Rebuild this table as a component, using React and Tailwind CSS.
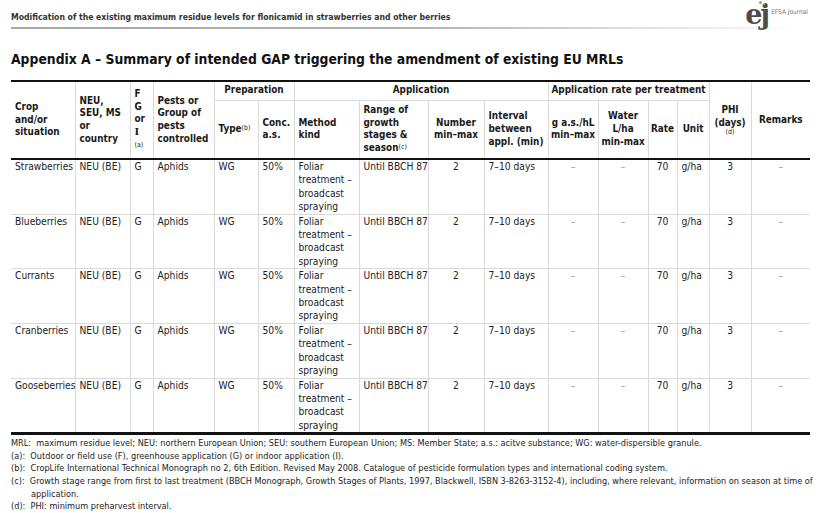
import React from "react";

const widths = [64, 55, 23, 61, 44, 36, 65, 69, 56, 64, 50, 50, 29, 32, 42, 59];

const crops = ["Strawberries", "Blueberries", "Currants", "Cranberries", "Gooseberries"];

const body = "font-['DejaVu_Sans_Condensed','DejaVu_Sans',sans-serif]";
const bold = "font-['DejaVu_Sans_Condensed','DejaVu_Sans',sans-serif] font-bold";

function Sup({ children }) {
  return <span className="text-[7px] font-normal align-[2px] leading-none">{children}</span>;
}

function Logo() {
  return (
    <div className="flex items-end gap-[3px] pr-[12px]">
      <div className="relative">
        <span className="absolute left-[14px] -top-[2px] flex gap-[1px]">
          <span className="w-[3px] h-[3px] rounded-full bg-[#9a9a9a]" />
          <span className="w-[2px] h-[2px] rounded-full bg-[#b5b5b5] mt-[2px]" />
        </span>
        <span className="block font-['DejaVu_Serif',serif] font-bold text-[27px] leading-[24px] text-[#4d4d4d] tracking-[-2px]">
          ej
        </span>
      </div>
      <span className="font-['DejaVu_Sans_Condensed','DejaVu_Sans',sans-serif] text-[6.5px] text-[#777] mb-[9px]">
        EFSA Journal
      </span>
    </div>
  );
}

export default function App() {
  const cellL = "border-l border-[#dadada]";
  const top = "border-t-2 border-t-[#111]";
  const bot = "border-b-2 border-b-[#111]";
  return (
    <div className={`w-[820px] h-[513px] bg-white text-[#222] overflow-hidden ${body}`}>
      {/* running header */}
      <div className="flex items-end justify-between pl-[11px] pt-[3px]">
        <div className="text-[8.6px] font-bold text-[#333] pb-[3px]">
          Modification of the existing maximum residue levels for flonicamid in strawberries and other berries
        </div>
        <Logo />
      </div>
      <div className="ml-[11px] w-[790px] h-[2px] bg-gradient-to-r from-[#a8a8a8] via-[#b0b0b0] to-transparent" />

      <h1 className={`${bold} text-[13.8px] leading-[18px] text-[#111] ml-[11px] mt-[21px]`}>
        Appendix A – Summary of intended GAP triggering the amendment of existing EU MRLs
      </h1>

      <table className="ml-[11px] mt-[12px] w-[799px] table-fixed border-collapse">
        <colgroup>
          {widths.map((w, i) => (
            <col key={i} style={{ width: w }} />
          ))}
        </colgroup>
        <thead className={`${bold} text-[9.9px] leading-[12.6px] text-[#1a1a1a]`}>
          <tr className="h-[19px]">
            <th rowSpan={2} className={`${top} ${bot} text-left align-middle px-[4px]`}>
              Crop and/or situation
            </th>
            <th rowSpan={2} className={`${cellL} ${top} ${bot} text-left align-middle px-[4px]`}>
              NEU, SEU, MS or country
            </th>
            <th rowSpan={2} className={`${cellL} ${top} ${bot} text-left align-middle px-[4px]`}>
              F<br />G<br />or<br />
              <span className="font-['DejaVu_Serif',serif]">I</span>
              <br />
              <span className="text-[7px] font-normal">(a)</span>
            </th>
            <th rowSpan={2} className={`${cellL} ${top} ${bot} text-left align-middle px-[4px]`}>
              Pests or Group of pests controlled
            </th>
            <th colSpan={2} className={`${cellL} ${top} border-b border-b-[#dadada] text-center align-middle`}>
              Preparation
            </th>
            <th colSpan={4} className={`${cellL} ${top} border-b border-b-[#dadada] text-center align-middle`}>
              Application
            </th>
            <th colSpan={4} className={`${cellL} ${top} border-b border-b-[#dadada] text-center align-middle whitespace-nowrap px-0`}>
              Application rate per treatment
            </th>
            <th rowSpan={2} className={`${cellL} ${top} ${bot} text-center align-middle`}>
              PHI
              <br />
              (days)
              <br />
              <span className="block text-[7px] font-normal leading-[7px]">(d)</span>
            </th>
            <th rowSpan={2} className={`${cellL} ${top} ${bot} text-center align-middle`}>
              Remarks
            </th>
          </tr>
          <tr className="h-[59px]">
            <th className={`${cellL} ${bot} text-left align-middle pl-[4px] whitespace-nowrap`}>
              Type<Sup>(b)</Sup>
            </th>
            <th className={`${cellL} ${bot} text-left align-middle px-[4px]`}>Conc. a.s.</th>
            <th className={`${cellL} ${bot} text-left align-middle px-[4px]`}>Method kind</th>
            <th className={`${cellL} ${bot} text-left align-middle px-[4px]`}>
              Range of growth stages &amp;{" "}
              <span className="whitespace-nowrap">
                season<Sup>(c)</Sup>
              </span>
            </th>
            <th className={`${cellL} ${bot} text-center align-middle px-[2px]`}>Number min–max</th>
            <th className={`${cellL} ${bot} text-left align-middle px-[4px]`}>
              Interval between appl. (min)
            </th>
            <th className={`${cellL} ${bot} text-center align-middle px-0`}>g a.s./hL min–max</th>
            <th className={`${cellL} ${bot} text-center align-middle px-0`}>
              Water
              <br />
              L/ha
              <br />
              min-max
            </th>
            <th className={`${cellL} ${bot} text-center align-middle`}>Rate</th>
            <th className={`${cellL} ${bot} text-center align-middle`}>Unit</th>
          </tr>
        </thead>
        <tbody className="text-[10.2px] leading-[13.4px] text-[#222]">
          {crops.map((crop, i) => {
            const last = i === crops.length - 1;
            const rb = last ? "border-b-[3px] border-b-[#111]" : "border-b border-b-[#dadada]";
            const td = `${cellL} ${rb} align-top px-[4px]`;
            return (
              <tr key={crop} className="h-[54px]">
                <td className={`${rb} align-top px-[4px] whitespace-nowrap`}>{crop}</td>
                <td className={`${td} whitespace-nowrap`}>NEU (BE)</td>
                <td className={td}>G</td>
                <td className={td}>Aphids</td>
                <td className={td}>WG</td>
                <td className={td}>50%</td>
                <td className={td}>Foliar treatment – broadcast spraying</td>
                <td className={`${td} whitespace-nowrap`}>Until BBCH 87</td>
                <td className={`${td} text-center`}>2</td>
                <td className={`${td} whitespace-nowrap`}>7–10 days</td>
                <td className={`${td} text-center text-[#999]`}>–</td>
                <td className={`${td} text-center text-[#999]`}>–</td>
                <td className={`${td} text-center`}>70</td>
                <td className={td}>g/ha</td>
                <td className={`${td} text-center`}>3</td>
                <td className={`${td} text-center text-[#999]`}>–</td>
              </tr>
            );
          })}
        </tbody>
      </table>

      <div className="ml-[11px] mt-[2px] w-[806px] text-[9.1px] leading-[12.6px] text-[#222]">
        <p>
          MRL:&nbsp; maximum residue level; NEU: northern European Union; SEU: southern European Union; MS: Member State;
          a.s.: acitve substance; WG: water-dispersible granule.
        </p>
        <p className="pl-[20px] -indent-[20px]">
          (a):&nbsp; Outdoor or field use (F), greenhouse application (G) or indoor application (I).
        </p>
        <p className="pl-[20px] -indent-[20px]">
          (b):&nbsp; CropLife International Technical Monograph no 2, 6th Edition. Revised May 2008. Catalogue of pesticide
          formulation types and international coding system.
        </p>
        <p className="pl-[20px] -indent-[20px]">
          (c):&nbsp; Growth stage range from first to last treatment (BBCH Monograph, Growth Stages of Plants, 1997, Blackwell,
          ISBN 3-8263-3152-4), including, where relevant, information on season at time of application.
        </p>
        <p className="pl-[20px] -indent-[20px]">(d):&nbsp; PHI: minimum preharvest interval.</p>
      </div>
    </div>
  );
}
